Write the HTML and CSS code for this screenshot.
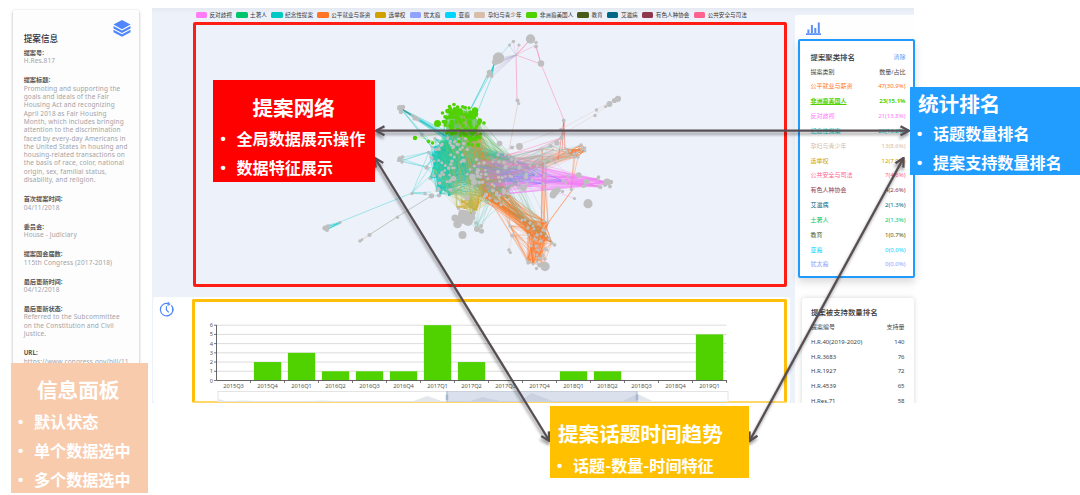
FILE: index.html
```html
<!DOCTYPE html>
<html lang="zh-CN">
<head>
    <meta charset="UTF-8">
    <meta name="viewport" content="width=device-width, initial-scale=1.0">
    <title>提案可视分析系统</title>
    <link rel="stylesheet" href="styles.css">
</head>
<body>

<div class="board">
    <!-- Bill info panel -->
    <aside class="info">
        <svg class="layers-icon" viewBox="0 0 18 17">
            <path d="M9 0 L17.5 4.6 L9 9.2 L0.5 4.6 Z"/>
            <path d="M0.5 6 L9 10.4 L17.5 6 V8.6 L9 13 L0.5 8.6 Z"/>
            <path d="M0.5 9.8 L9 14.2 L17.5 9.8 V12.2 L9 16.7 L0.5 12.2 Z"/>
        </svg>
        <h2>提案信息</h2>
        <dl>
            <dt>提案号:</dt>
            <dd>H.Res.817</dd>
            <dt>提案标题:</dt>
            <dd>Promoting and supporting the<br>goals and ideals of the Fair<br>Housing Act and recognizing<br>April 2018 as Fair Housing<br>Month, which includes bringing<br>attention to the discrimination<br>faced by every-day Americans in<br>the United States in housing and<br>housing-related transactions on<br>the basis of race, color, national<br>origin, sex, familial status,<br>disability, and religion.</dd>
            <dt>首次提案时间:</dt>
            <dd>04/11/2018</dd>
            <dt>委员会:</dt>
            <dd>House - Judiciary</dd>
            <dt>提案国会届数:</dt>
            <dd>115th Congress (2017-2018)</dd>
            <dt>最后更新时间:</dt>
            <dd>04/12/2018</dd>
            <dt>最后更新状态:</dt>
            <dd>Referred to the Subcommittee<br>on the Constitution and Civil<br>Justice.</dd>
            <dt>URL:</dt>
            <dd>https://www.congress.gov/bill/11</dd>
        </dl>
    </aside>

    <main class="main">
        <div class="left">
            <ul class="legend" id="legend"></ul>
            <div class="network-frame">
                <svg id="network" viewBox="196 25 588 259"></svg>
            </div>
            <div class="time">
                <svg class="clock-icon" viewBox="0 0 15 15">
                    <path d="M12.3 3.3 A6.3 6.3 0 1 1 9.6 1.6"/>
                    <path d="M13.3 5 A6.3 6.3 0 0 1 13.4 9.8"/>
                    <path d="M9 0.2 L10.6 2.2 L8.4 3.4"/>
                    <path d="M7.4 4.2 V8 L9.8 10.4"/>
                </svg>
                <div class="time-frame">
                    <svg id="chart" viewBox="195 302 588 100"></svg>
                </div>
            </div>
        </div>

        <div class="right">
            <svg class="bar-icon" viewBox="0 0 15 13">
                <path d="M0 12.2 H15 M2.4 11 V7.5 M5.9 11 V3 M9.3 11 V6 M12.8 11 V0.5"/>
            </svg>
            <section class="card card-rank">
                <h3>提案聚类排名 <a>清除</a></h3>
                <div class="row"><span>提案类别</span><span>数量/占比</span></div>
                <div id="rank"></div>
            </section>
            <section class="card card-support">
                <h3>提案被支持数量排名</h3>
                <div class="row"><span>提案编号</span><span>支持量</span></div>
                <div class="row"><span>H.R.40(2019-2020)</span><span>140</span></div>
                <div class="row"><span>H.R.3683</span><span>76</span></div>
                <div class="row"><span>H.R.1927</span><span>72</span></div>
                <div class="row"><span>H.R.4539</span><span>65</span></div>
                <div class="row"><span>H.Res.71</span><span>58</span></div>
            </section>
        </div>
    </main>
</div>

<!-- Arrows between the notes -->
<svg class="arrows" viewBox="0 0 1080 495">
    <defs>
        <marker id="head" viewBox="0 0 12 12" refX="11" refY="6" markerWidth="12" markerHeight="12" markerUnits="userSpaceOnUse" orient="auto-start-reverse">
            <path d="M2.5 1.5 L11 6 L2.5 10.5"/>
        </marker>
    </defs>
    <path d="M376 130.7 H909"/>
    <path d="M375 158 L549.5 441"/>
    <path d="M903.5 158 L749.5 441"/>
</svg>

<!-- Notes -->
<div class="note note-info">
    <h1>信息面板</h1>
    <ul>
        <li>默认状态</li>
        <li>单个数据选中</li>
        <li>多个数据选中</li>
    </ul>
</div>
<div class="note note-network">
    <h1>提案网络</h1>
    <ul>
        <li>全局数据展示操作</li>
        <li>数据特征展示</li>
    </ul>
</div>
<div class="note note-rank">
    <h1>统计排名</h1>
    <ul>
        <li>话题数量排名</li>
        <li>提案支持数量排名</li>
    </ul>
</div>
<div class="note note-time">
    <h1>提案话题时间趋势</h1>
    <ul>
        <li>话题-数量-时间特征</li>
    </ul>
</div>

<script src="script.js"></script>
</body>
</html>
```
FILE: styles.css
```css
body {
    position: relative;
    margin: 0;
    width: 1080px;
    height: 495px;
    overflow: hidden;
    background: #fff;
    color: #444;
    font-family: "Noto Sans", "Noto Sans CJK SC", sans-serif;
}
h1, h2, h3, ul, dl, dd {
    margin: 0;
    padding: 0;
}
svg {
    display: block;
}

.board {
    display: flex;
    align-items: flex-start;
    gap: 13px;
    height: 403px;
    padding-left: 13px;
    overflow: hidden;
}

/* Info panel */
.info {
    box-sizing: border-box;
    width: 126px;
    height: 400px;
    margin-top: 10px;
    padding: 10px 0 0 10.7px;
    border-radius: 2px;
    background: #fdfdfe;
    box-shadow: 0 1px 3px rgba(0,0,0,0.35);
}
.layers-icon {
    width: 18px;
    height: 17px;
    margin-left: 89px;
    fill: #4f86fb;
}
.info h2 {
    margin: -4px 0 4px;
    font-size: 8.6px;
    font-weight: 500;
    line-height: 12px;
    color: #2f2f3c;
}
.info dt, .info dd {
    font-size: 6.5px;
    line-height: 8.3px;
    letter-spacing: 0.13px;
    white-space: nowrap;
}
.info dt {
    font-size: 6.2px;
    letter-spacing: 0;
    font-weight: bold;
    color: #555;
}
.info dd {
    margin-bottom: 10.9px;
    color: #a3a3a6;
}

/* Main board */
.main {
    display: flex;
    width: 762px;
    height: 395px;
    margin-top: 8px;
    background: linear-gradient(#e5e9f2, #edf1fa 6px);
}
.left {
    width: 643px;
}
.legend {
    display: flex;
    gap: 4.2px;
    height: 14px;
    padding: 0 0 0 43.5px;
    align-items: center;
    list-style: none;
    font-size: 5.6px;
    line-height: 8px;
    color: #333;
    white-space: nowrap;
}
.legend li {
    display: flex;
    align-items: center;
    gap: 2.5px;
}
.swatch {
    width: 11.5px;
    height: 6.5px;
    border-radius: 1.5px;
}
.network-frame {
    box-sizing: border-box;
    width: 594px;
    height: 265px;
    margin-left: 41px;
    border: 3px solid #ff1c14;
    border-radius: 2px;
}
#network {
    width: 588px;
    height: 259px;
}

/* Time trend */
.time {
    display: flex;
    width: 637px;
    height: 106px;
    margin: 10px 0 0 1px;
    border-radius: 3px;
    background: #fff;
}
.clock-icon {
    width: 15px;
    height: 15px;
    margin: 5px 18px 0 6px;
    fill: none;
    stroke: #4f86fb;
    stroke-width: 1.2;
}
.time-frame {
    box-sizing: border-box;
    width: 595px;
    height: 104px;
    margin-top: 2px;
    border: 3px solid #ffbe0a;
    border-bottom: 2px solid #ffd76a;
    border-radius: 2px;
}
#chart {
    width: 589px;
    height: 100px;
    font-size: 5.7px;
}

/* Right column */
.right {
    width: 119px;
    margin-top: 7px;
    border-radius: 3px 0 0 0;
    background: #fefefe;
}
.bar-icon {
    width: 15px;
    height: 13px;
    margin: 6.5px 0 4.5px 11px;
    fill: none;
    stroke: #5b8ff9;
    stroke-width: 2;
}
.card {
    box-sizing: border-box;
    font-size: 6px;
    background: #fff;
}
.card h3 {
    display: flex;
    justify-content: space-between;
    font-size: 7.4px;
    font-weight: 500;
    line-height: 16px;
    color: #333;
}
.card h3 a {
    font-size: 6px;
    font-weight: normal;
    color: #5b9bf9;
}
.row {
    display: flex;
    justify-content: space-between;
    line-height: 14.77px;
    white-space: nowrap;
}
.row.active {
    font-weight: bold;
}
.row.active span:first-child {
    text-decoration: underline;
}
.card-rank {
    width: 117px;
    height: 239px;
    margin-left: 3px;
    padding: 7.5px 7.5px 0 10.5px;
    border: 2.5px solid #1f9bff;
    border-radius: 2px;
    box-shadow: 0 4px 8px rgba(0,0,0,0.15);
}
.card-rank .row {
    line-height: 14.85px;
}
.card-support {
    width: 112px;
    height: 130px;
    margin: 20px 0 0 7px;
    padding: 6px 9.5px 0 9px;
    border-radius: 3px;
    box-shadow: 0 0 5px rgba(0,0,0,0.16);
}

/* Arrows */
.arrows {
    position: absolute;
    left: 0;
    top: 0;
    width: 1080px;
    height: 495px;
    filter: drop-shadow(-1px 3px 1.5px rgba(0,0,0,0.4));
}
.arrows path {
    fill: none;
    stroke: #574e53;
    stroke-width: 2.3;
}
.arrows > path {
    marker-start: url(#head);
    marker-end: url(#head);
}

/* Notes lie over the board */
.note {
    position: absolute;
    box-sizing: border-box;
    color: #fff;
    white-space: nowrap;
    font-family: "Noto Sans CJK SC", sans-serif;
}
.note h1 {
    font-size: 20.6px;
    line-height: 32px;
}
.note ul {
    list-style: none;
    font-size: 16.1px;
    font-weight: bold;
    line-height: 29px;
}
.note li {
    display: flex;
}
.note li::before {
    content: "•";
    width: 16px;
    margin-left: -1px;
    font-family: "Liberation Sans", sans-serif;
    font-size: 15px;
}
.note-info {
    left: 11px;
    top: 363px;
    width: 137px;
    height: 130px;
    padding: 10px 0 0 8px;
    background: #f8cbad;
}
.note-info h1 {
    padding: 0 0 2px 18px;
}
.note-network {
    left: 212.5px;
    top: 79.5px;
    width: 162px;
    height: 102.5px;
    padding: 11.5px 0 0 9px;
    background: #ff0000;
}
.note-network h1 {
    padding: 0 0 1px 31px;
}
.note-rank {
    left: 910px;
    top: 87px;
    width: 170px;
    height: 88px;
    padding: 0 0 0 8px;
    background: #219cff;
}
.note-time {
    left: 550px;
    top: 406px;
    width: 199px;
    height: 72px;
    padding: 11px 0 0 8px;
    background: #ffc000;
}
.note-time h1 {
    padding-bottom: 2px;
}
```
FILE: script.js
```js
// Topics, in legend order
const topics = [
    ['反对歧视', '#ff7bf7'],
    ['土著人', '#00c46c'],
    ['纪念性提案', '#00c9c4'],
    ['公平就业与薪资', '#ff7524'],
    ['选举权', '#d1a100'],
    ['犹太裔', '#8fa2ff'],
    ['亚裔', '#00d5ff'],
    ['孕妇与青少年', '#d9bda8'],
    ['非洲裔美国人', '#50d200'],
    ['教育', '#4b5a19'],
    ['艾滋病', '#006786'],
    ['有色人种协会', '#8f384c'],
    ['公共安全与司法', '#ff628f']
];
const colors = Object.fromEntries(topics);

document.getElementById('legend').innerHTML = topics.map(t =>
    `<li><span class="swatch" style="background:${t[1]}"></span>${t[0]}</li>`
).join('');

// Ranking by topic
const rank = [
    ['公平就业与薪资', '47(30.9%)'],
    ['非洲裔美国人', '23(15.1%'],
    ['反对歧视', '21(13.8%)'],
    ['纪念性提案', '20(13.2%)'],
    ['孕妇与青少年', '13(8.6%)'],
    ['选举权', '12(7.9%)'],
    ['公共安全与司法', '7(4.6%)'],
    ['有色人种协会', '4(2.6%)'],
    ['艾滋病', '2(1.3%)'],
    ['土著人', '2(1.3%)'],
    ['教育', '1(0.7%)'],
    ['亚裔', '0(0.0%)'],
    ['犹太裔', '0(0.0%)']
];
document.getElementById('rank').innerHTML = rank.map((r, i) =>
    `<div class="row${i === 1 ? ' active' : ''}" style="color:${colors[r[0]]}"><span>${r[0]}</span><span>${r[1]}</span></div>`
).join('');

// Bar chart
const quarters = ['2015Q3', '2015Q4', '2016Q1', '2016Q2', '2016Q3', '2016Q4', '2017Q1', '2017Q2',
    '2017Q3', '2017Q4', '2018Q1', '2018Q2', '2018Q3', '2018Q4', '2019Q1'];
const counts = [0, 2, 3, 1, 1, 1, 6, 2, 0, 0, 1, 1, 0, 0, 5];
const x0 = 216, y0 = 380.5, step = 34, unit = 9.22;
let chart = '';
for (let v = 0; v <= 6; v++) {
    const y = y0 - v * unit;
    if (v) chart += `<path d="M${x0} ${y}H726" stroke="#dcdcdc"/>`;
    chart += `<path d="M213.5 ${y}H${x0}" stroke="#555" stroke-width="0.8"/>`;
    chart += `<text x="212.5" y="${y + 2}" text-anchor="end" fill="#555">${v}</text>`;
}
quarters.forEach((q, i) => {
    const x = x0 + i * step;
    chart += `<rect x="${x + 3.4}" y="${y0 - counts[i] * unit}" width="27.3" height="${counts[i] * unit}" fill="#50d200"/>`;
    chart += `<path d="M${x + step} ${y0}v2.5" stroke="#555" stroke-width="0.8"/>`;
    chart += `<text x="${x + step / 2}" y="388.3" text-anchor="middle" fill="#555">${q}</text>`;
});
chart += `<path d="M${x0} 325V${y0}H726.5" fill="none" stroke="#555" stroke-width="0.9"/>`;
// Zoom slider under the axis
chart += `<rect x="217.5" y="391.5" width="510" height="14" fill="#fff" stroke="#e4e4e4"/>
    <path d="M218 399L225 401H232L243 400.5L255 401H310L322 400.5L334 401H413L427 396L441 401H470L482 397L500 401H520L531 393L552 401H622L637 394L652 401H727V404H218Z" fill="#e3e6eb"/>
    <rect x="446" y="391" width="190.5" height="14" fill="#a7b7d3" fill-opacity="0.42"/>
    <path d="M446.5 391V403M636.5 391V403" stroke="#a7b7cf"/>
    <path d="M446.5 394.5V400M636.5 394.5V400" stroke="#a7b7cf" stroke-width="2.5"/>`;
document.getElementById('chart').innerHTML = chart;

// Network, fixed seed so the drawing is stable
let seed = 7;
function rnd() {
    seed = (seed * 16807) % 2147483647;
    return seed / 2147483647;
}
// Points scattered in an ellipse
function cloud(n, cx, cy, rx, ry) {
    const pts = [];
    for (let i = 0; i < n; i++) {
        const a = rnd() * Math.PI * 2, d = Math.sqrt(rnd());
        pts.push([cx + Math.cos(a) * rx * d, cy + Math.sin(a) * ry * d]);
    }
    return pts;
}
let edges = '', dots = '';
function line(a, b, color, opacity = 0.35, width = 0.6) {
    edges += `<path d="M${a[0].toFixed(1)} ${a[1].toFixed(1)}L${b[0].toFixed(1)} ${b[1].toFixed(1)}" stroke="${color}" stroke-opacity="${opacity}" stroke-width="${width}"/>`;
}
function link(from, to, n, color, opacity, width) {
    for (let i = 0; i < n; i++) {
        line(from[Math.floor(rnd() * from.length)], to[Math.floor(rnd() * to.length)], color, opacity, width);
    }
}
function dot(x, y, r, color = '#bfbfbf') {
    dots += `<circle cx="${x.toFixed(1)}" cy="${y.toFixed(1)}" r="${r}" fill="${color}"/>`;
}

const teal = '#12cbc6', orange = '#ff7a2c', pink = '#ff7fae', violet = '#f57cf5',
    green = '#50d200', gold = '#d8a92c', sand = '#e3d3cc', gray = '#bfbfbf';

const greens = cloud(100, 460, 122, 20, 16).concat(cloud(18, 468, 138, 18, 9));
const teals = cloud(62, 447, 168, 20, 29);
const tealTop = cloud(26, 452, 145, 23, 10);
const centre = cloud(58, 497, 174, 32, 22);
const golds = cloud(14, 470, 207, 14, 10);
const low = cloud(18, 498, 200, 19, 10);
const oranges = [[525, 220], [530, 223], [522, 220], [528, 228], [534, 229], [537, 235], [529, 235], [535, 239],
    [541, 234], [543, 230], [548, 223], [544, 221], [545, 231], [541, 241], [546, 236], [549, 239], [533, 226], [552, 243]];
const orangeLow = [[527, 260], [529, 262], [537, 255], [539, 258], [531, 246], [536, 246], [537, 262], [541, 259], [533, 264], [528, 263], [543, 265], [545, 259], [538, 250]];
const orangeRight = [[567, 152], [570, 151], [575, 157], [577, 153], [582, 149], [585, 148], [581, 145], [585, 151], [578, 157], [566, 149], [574, 154]];
const violets = [[530, 166], [532, 180], [536, 175], [543, 184], [544, 176], [563, 181], [566, 183], [568, 176], [579, 177], [584, 186], [587, 182], [598, 179], [598, 186],
    [606, 182], [607, 182], [600, 187], [609, 184], [520, 187], [524, 188], [527, 184], [545, 190]];
const fan = [[542, 149], [542, 155], [551, 146], [553, 150], [551, 160], [543, 161], [546, 167], [537, 166], [552, 156], [545, 164], [561, 138], [555, 163]];

// Dense core
link(centre, centre, 90, '#7f9fd6', 0.4);
link(teals, teals, 430, teal, 0.42, 0.7);
link(teals, tealTop, 150, teal, 0.4, 0.7);
link(teals, centre, 280, '#1fbdb4', 0.4, 0.6);
link(tealTop, centre, 120, '#1fbdb4', 0.4);
link(greens, greens, 280, '#57cf25', 0.45, 0.6);
link(greens, teals, 160, '#2fcf86', 0.38);
link(greens, centre, 120, '#7cc47a', 0.45);
link(greens, low, 50, '#84b96a', 0.45);
link(centre, low, 100, '#68ae92', 0.45);
link(teals, low, 80, '#4cc5a4', 0.4);
link(golds, golds, 75, gold, 0.6);
link(golds, centre, 60, gold, 0.35);
link(golds, teals.slice(0, 20), 35, '#b7b957', 0.4);
link(greens.slice(0, 8), golds, 24, '#b8b75a', 0.4);
link(greens.slice(80), low, 30, orange, 0.35);
link(low, centre, 25, orange, 0.35);

// Salary branch
link(low, low, 35, orange, 0.45);
link(low, oranges, 130, orange, 0.45);
link(oranges, oranges, 95, orange, 0.65, 0.7);
link(oranges, orangeLow, 75, orange, 0.5);
link(orangeLow, orangeLow, 38, orange, 0.6);
link(centre, oranges, 42, '#76b98d', 0.33);
link(orangeRight, orangeRight, 46, orange, 0.7, 0.8);
link(orangeRight.slice(0, 5), fan, 24, orange, 0.35);
link([[543, 161], [542, 149], [546, 167]], oranges.slice(8, 12), 12, orange, 0.45);
[[572, 190], [574, 188]].forEach(p => line(p, [548, 223], orange, 0.5, 0.8));
[[575, 157], [578, 157], [574, 154]].forEach(p => line(p, [571, 189], orange, 0.45, 0.8));
[[510, 226], [512, 236], [510, 226]].forEach(p => {
    link([p], orangeLow, 5, orange, 0.4);
    link([p], low, 3, orange, 0.4);
    link([p], oranges, 3, orange, 0.4);
});
line([512, 236], [509, 250], sand, 0.8);
link(centre, orangeRight, 25, '#f48a74', 0.35);

// Discrimination branch and the fan above it
link(centre, violets, 110, violet, 0.36);
link(violets, violets, 55, violet, 0.48);
link(centre.slice(20), violets.slice(0, 6), 36, '#788cff', 0.45);
link(centre, fan, 55, '#88b7a4', 0.42);
link(centre, fan, 22, pink, 0.4);
link(fan, orangeRight, 10, '#6ccfc4', 0.4);
line([544, 188], [574, 198], violet, 0.5);
line([552, 158], [568, 176], violet, 0.4);
link(golds, [[480, 230], [477, 226], [476, 229]], 5, '#69c9a9', 0.5);
link(low, [[480, 230], [477, 226], [481, 228]], 7, '#69c9a9', 0.5);

// Outlying chains
const hub = [516, 55];
[[498, 58], [500, 60], [497, 62], [490, 72], [491, 76], [495, 64]].forEach(p => {
    line(hub, p, '#9db9cf', 0.5);
    line(hub, [p[0], p[1] + 2], '#d3a6cf', 0.5);
});
line([498, 58], [513, 41], teal, 0.5);
line(hub, [509, 45], '#88afc4', 0.5);
line(hub, [513, 41], violet, 0.4);
line(hub, [519, 45], pink, 0.5);
line(hub, [530, 40], pink, 0.8, 1);
line(hub, [534, 46], pink, 0.6);
line(hub, [541, 64], pink, 0.6, 0.8);
line([536, 46], [541, 64], pink, 0.8, 1);
line([541, 64], [564, 120], pink, 0.6, 0.8);
line(hub, [517, 100], pink, 0.6, 0.9);
line([518, 103], [509, 150], sand, 0.9, 0.9);
for (let i = 0; i < 6; i++) {
    line([497 - i * 0.6, 60], [488 + i * 0.9, 76], teal, 0.6, 0.9);
}
line([488, 74], [471, 108], teal, 0.7, 0.9);
line([489, 76], [468, 114], teal, 0.6, 0.7);
line([492, 76], [475, 118], teal, 0.5, 0.8);
[[563, 130], [562, 150], [565, 150], [558, 160]].forEach(p => line([564, 120], p, '#f0645c', 0.6, 0.9));
line([561, 129], [505, 150], sand, 0.9);
line([561, 129], [596, 110], sand, 0.9);
line([564, 133], [595, 115], sand, 0.9);
line([595, 115], [616, 99], sand, 0.9);
line([596, 110], [618, 98], sand, 0.9);
[[402, 109], [400, 108], [404, 111]].forEach(p => link([p], tealTop, 8, teal, 0.45));
link([[402, 109], [399, 107]], [[416, 118], [417, 119]], 5, '#7b8790', 0.5);
line([415, 119], [440, 132], '#9da6d2', 0.6);
[[400, 158], [402, 161], [399, 161]].forEach(p => {
    line(p, [429, 152], teal, 0.45);
    line(p, [426, 167], teal, 0.45);
});
link([[429, 152], [426, 167]], teals, 18, teal, 0.4);
[[429, 152], [430, 167], [430, 176], [431, 192], [425, 193], [438, 196]].forEach(p => line([412, 193], p, teal, 0.5));
line([412, 193], [340, 222], teal, 0.45, 0.8);
link([[340, 222], [341, 223]], [[325, 226], [328, 229], [326, 228], [329, 226]], 8, teal, 0.6);
line([431, 196], [397, 217], '#9da996', 0.7, 0.8);
line([397, 217], [369, 235], '#9da996', 0.8, 0.8);
line([369, 235], [360, 241], '#d7c6a0', 0.9, 0.8);
line([422, 138], [448, 145], green, 0.5);
line([415, 138], [448, 132], green, 0.4);
line([437, 124], [455, 128], green, 0.5);

// Nodes
centre.concat(low).forEach((p, i) => {
    if (i % 4) dot(p[0], p[1], (1.2 + rnd() * 0.9).toFixed(1));
});
teals.concat(tealTop).forEach((p, i) => {
    if (i % 3) dot(p[0], p[1], (1.3 + rnd() * 0.6).toFixed(1));
});
greens.forEach(p => dot(p[0], p[1], (1.4 + rnd() * 0.9).toFixed(1), green));
oranges.concat(orangeLow, orangeRight, violets, fan).forEach((p, i) => dot(p[0], p[1], i % 2 ? 1.7 : 1.4));
[[437.5, 123.5, 3.5], [475, 110.5, 3.2], [449.5, 106.5, 1.8], [454, 104.5, 1.8], [442.5, 113, 1.8], [477, 137, 2.2],
    [415, 138, 2.2], [428.5, 141.5, 1.8], [432.5, 143, 1.8], [469, 108, 1.7], [484, 123, 1.8]
].forEach(n => dot(n[0], n[1], n[2], green));
[[498.5, 58, 5.7], [495, 62, 3], [489.5, 72.5, 2.8], [487.5, 76.5, 1.7], [491.5, 76, 2], [509.5, 45, 1.5], [513.5, 41.5, 1.7],
    [519, 45, 1.6], [516, 55, 1.3], [530.5, 39, 4.7], [536, 42.5, 1.7], [536, 46.5, 2], [541, 63.5, 3.2], [517.5, 100.5, 2],
    [518.7, 103.5, 1.6], [563.7, 120.5, 1.9], [561, 129.5, 1.8], [561.7, 138, 2], [557, 143, 2.7], [550.5, 146, 2],
    [596.5, 110, 1.7], [595, 115.5, 1.7], [605.7, 106.5, 1.6], [609.5, 104, 2.9], [614.5, 100.5, 2.6], [618, 98.8, 3.1],
    [400, 108, 3], [403, 107, 2.2], [401, 112, 2.2], [415, 118, 2.6], [418, 119.5, 2], [412, 115.5, 1.4], [422, 135, 1.8],
    [400, 159, 2.7], [402.5, 157, 1.8], [398.5, 160.5, 1.6], [402, 162, 1.7], [428.5, 152.5, 1.8], [426.5, 167.5, 2.2],
    [412, 193.5, 1.7], [425, 193.5, 1.7], [431.5, 195.8, 2.6], [439, 195.5, 2.1], [340, 222.3, 1.6], [325, 228, 2.6], [328, 226.5, 2.3],
    [327, 230, 2], [397.5, 217.3, 1.7], [369.5, 235, 2.1], [360, 241, 1.8], [362, 239.7, 1.4], [519.5, 146.5, 3.4], [512, 147.5, 2],
    [472.5, 177, 3.2], [474, 182, 3], [499.5, 143.5, 2.8], [453.5, 178.5, 2.6], [523.5, 188, 3.3], [526, 177, 2.2],
    [464.5, 217, 7], [457.5, 224, 4.3], [455, 218, 3.6], [468, 221, 5], [472, 217, 3.2], [462, 213, 3.6], [462.5, 235, 4],
    [477, 229, 3], [481.5, 231, 2.6], [481, 226, 2], [476, 223, 1.7], [467, 198, 2.6], [458.5, 208.5, 1.6], [474, 213, 2],
    [510, 226, 1.7], [512, 235.5, 1.9], [509, 250, 1.7], [510.3, 252.5, 1.6], [545, 266.5, 4.7], [539.5, 265, 2.4], [536.5, 268.5, 1.7],
    [545, 249, 1.8], [547, 250, 1.6], [554.5, 244.8, 1.9], [543, 255.5, 1.7], [578.7, 175, 2.8], [586.7, 181.8, 3], [598.5, 177, 1.8],
    [583.5, 186.3, 1.7], [607, 182, 3.4], [611, 182, 2.2], [600.3, 187.3, 2], [605, 185.2, 1.7], [610, 186.5, 1.9],
    [555, 192, 3.8], [553, 195, 3.4], [558, 190, 2.8], [562.5, 191.5, 1.7], [571.3, 189.3, 1.6], [574.5, 198.5, 1.6], [588, 203.7, 4.6]
].forEach(n => dot(n[0], n[1], n[2], gray));

document.getElementById('network').innerHTML = `<g fill="none">${edges}</g>${dots}`;
```
